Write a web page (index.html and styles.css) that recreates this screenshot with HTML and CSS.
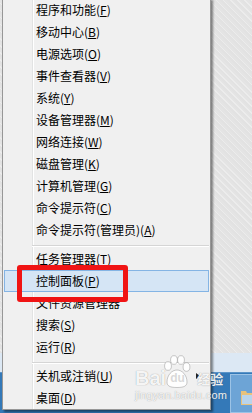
FILE: index.html
```html
<!DOCTYPE html>
<html lang="zh-CN">
<head>
<meta charset="utf-8">
<link rel="stylesheet" href="styles.css">
</head>
<body>
<div class="desktop">
  <div class="wall"></div>
  <div class="band"></div>
  <div class="taskbar">
    <div class="tile">
      <svg class="folder" width="12" height="18" viewBox="0 0 12 18">
        <path d="M1 3h5l1 2h5v12H1z" fill="#e8c27c"/>
        <rect x="2" y="7" width="10" height="9" fill="#b9d4ec"/>
      </svg>
    </div>
  </div>
</div>

<div class="menu">
  <div class="item">程序和功能(<u>F</u>)</div>
  <div class="item">移动中心(<u>B</u>)</div>
  <div class="item">电源选项(<u>O</u>)</div>
  <div class="item">事件查看器(<u>V</u>)</div>
  <div class="item">系统(<u>Y</u>)</div>
  <div class="item">设备管理器(<u>M</u>)</div>
  <div class="item">网络连接(<u>W</u>)</div>
  <div class="item">磁盘管理(<u>K</u>)</div>
  <div class="item">计算机管理(<u>G</u>)</div>
  <div class="item">命令提示符(<u>C</u>)</div>
  <div class="item">命令提示符(管理员)(<u>A</u>)</div>
  <div class="sep"></div>
  <div class="item">任务管理器(<u>T</u>)</div>
  <div class="item active">控制面板(<u>P</u>)</div>
  <div class="item">文件资源管理器</div>
  <div class="item">搜索(<u>S</u>)</div>
  <div class="item">运行(<u>R</u>)</div>
  <div class="sep"></div>
  <div class="item sub"><span>关机或注销(<u>U</u>)</span><i class="arrow"></i></div>
  <div class="item">桌面(<u>D</u>)</div>
</div>

<div class="mark"></div>

<div class="watermark">
  <div class="wm-top">
    <span class="wm-bai">Bai</span>
    <span class="wm-paw">
      <svg width="28" height="33" viewBox="0 0 28 33">
        <g fill="rgba(255,255,255,0.9)" stroke="rgba(110,110,110,0.4)" stroke-width="0.9">
          <ellipse cx="5" cy="11" rx="3.4" ry="4.3"/>
          <ellipse cx="11" cy="5" rx="3.4" ry="4.3"/>
          <ellipse cx="18" cy="5" rx="3.4" ry="4.3"/>
          <ellipse cx="23.5" cy="12" rx="3.4" ry="4.3"/>
          <path d="M4 27c0-7 5-12 10-12s10 5 10 12c0 4-3 5.5-10 5.5s-10-1.5-10-5.5z"/>
        </g>
      </svg>
      <span class="wm-du">du</span>
    </span>
    <span class="wm-jy">经验</span>
  </div>
  <div class="wm-url">jingyan.baidu.com</div>
</div>
</body>
</html>
```

FILE: styles.css
```css
* { box-sizing: border-box; }
html, body {
  margin: 0;
  padding: 0;
  width: 252px;
  height: 413px;
  overflow: hidden;
}
body {
  position: relative;
  font-family: "Noto Sans CJK SC", "Noto Sans", sans-serif;
  background: #e6e6e6;
}

.desktop {
  display: flex;
  flex-direction: column;
  height: 413px;
}
.wall {
  flex: 1;
  background-color: #e4e4e4;
  background-image: repeating-linear-gradient(45deg, #e2e2e2 0 2px, #ececec 2px 3px, #e4e4e4 3px 5px);
}
.band {
  height: 19px;
  background: #dce8f4;
}
.taskbar {
  height: 41px;
  background: #3479b8;
  display: flex;
  justify-content: flex-end;
  border-top: 1px solid #5b94c8;
}
.tile {
  width: 22px;
  margin-top: 1px;
  background: #6da4d6;
  border: 1px solid #9cc3e6;
  border-right: 0;
  display: flex;
  align-items: flex-start;
  justify-content: flex-end;
  padding-top: 13px;
}

.menu {
  position: absolute;
  left: 2px;
  top: -2px;
  width: 209px;
  display: flex;
  flex-direction: column;
  background-color: #f0f0f0;
  background-image: linear-gradient(to right, transparent 29px, #e2e3e3 29px, #e2e3e3 30px, #ffffff 30px, #ffffff 31px, transparent 31px);
  border: 1px solid #979797;
  box-shadow: 2px 2px 2px rgba(0, 0, 0, 0.45);
  font-size: 12px;
  color: #000;
}
.item {
  height: 22px;
  line-height: 22px;
  padding-left: 33px;
  white-space: nowrap;
}
.item u {
  text-decoration: underline;
  text-underline-offset: 1px;
}
.item.active {
  margin: 0 1px;
  padding-left: 31px;
  background: #d5e5f5;
  border: 1px solid #84b4e4;
  line-height: 20px;
}
.item.sub {
  display: flex;
  justify-content: space-between;
  align-items: center;
  padding-right: 10px;
}
.arrow {
  width: 0;
  height: 0;
  border-left: 4px solid #222;
  border-top: 3px solid transparent;
  border-bottom: 3px solid transparent;
}
.sep {
  height: 7px;
  margin: 0 1px 0 29px;
  background: linear-gradient(to bottom, transparent 4px, #d5d5d5 4px, #d5d5d5 5px, #ffffff 5px, #ffffff 6px, transparent 6px);
}

.mark {
  position: absolute;
  left: 17px;
  top: 265px;
  width: 111px;
  height: 37px;
  border: 5px solid #f01414;
  border-radius: 3px;
}

.watermark {
  position: absolute;
  left: 135px;
  top: 352px;
  color: rgba(255, 255, 255, 0.92);
  text-shadow: 0 0 1px rgba(80, 80, 80, 0.6);
  font-family: "Liberation Sans", Arial, sans-serif;
}
.wm-top {
  display: flex;
  align-items: flex-end;
  height: 36px;
}
.wm-bai {
  font-size: 20px;
  font-weight: bold;
  line-height: 20px;
}
.wm-paw {
  position: relative;
  width: 28px;
  height: 33px;
  margin-left: -3px;
}
.wm-paw svg { display: block; }
.wm-du {
  position: absolute;
  left: 7px;
  top: 16px;
  font-size: 12px;
  font-weight: bold;
  line-height: 14px;
  color: rgba(215, 215, 215, 0.95);
  text-shadow: none;
}
.wm-jy {
  font-family: "Noto Sans CJK SC", sans-serif;
  font-size: 13px;
  font-weight: bold;
  line-height: 18px;
  margin-left: 6px;
}
.wm-url {
  font-size: 11px;
  line-height: 12px;
  margin-top: 1px;
  letter-spacing: 0.2px;
}
```
